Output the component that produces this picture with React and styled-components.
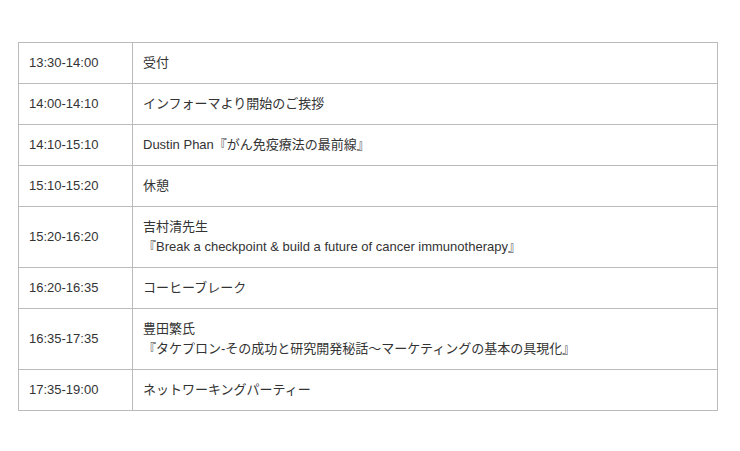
import React from 'react'
import styled, { createGlobalStyle } from 'styled-components'

const Global = createGlobalStyle`
  body {
    margin: 0;
    background: #fff;
    font-family: 'Liberation Sans', 'Noto Sans CJK JP', sans-serif;
  }
`

const Page = styled.div`
  padding: 42px 0 0 18px;
`

const Table = styled.table`
  width: 700px;
  border-collapse: collapse;
  table-layout: fixed;
  font-size: 13px;
  line-height: 20px;
  color: #333;
`

const Cell = styled.td`
  border: 1px solid #bbb;
  padding: 10px;
  vertical-align: middle;
  text-align: left;
  ${({ time }) => time && 'width: 93px;'}
`

const rows = [
  ['13:30-14:00', ['受付']],
  ['14:00-14:10', ['インフォーマより開始のご挨拶']],
  ['14:10-15:10', ['Dustin Phan『がん免疫療法の最前線』']],
  ['15:10-15:20', ['休憩']],
  ['15:20-16:20', ['吉村清先生', '『Break a checkpoint & build a future of cancer immunotherapy』']],
  ['16:20-16:35', ['コーヒーブレーク']],
  ['16:35-17:35', ['豊田繁氏', '『タケプロン-その成功と研究開発秘話～マーケティングの基本の具現化』']],
  ['17:35-19:00', ['ネットワーキングパーティー']],
]

export default function App() {
  return (
    <>
      <Global />
      <Page>
        <Table>
          <tbody>
            {rows.map(([time, lines]) => (
              <tr key={time}>
                <Cell time>{time}</Cell>
                <Cell>
                  {lines.map((l, i) => (
                    <React.Fragment key={i}>
                      {i > 0 && <br />}
                      {l}
                    </React.Fragment>
                  ))}
                </Cell>
              </tr>
            ))}
          </tbody>
        </Table>
      </Page>
    </>
  )
}
